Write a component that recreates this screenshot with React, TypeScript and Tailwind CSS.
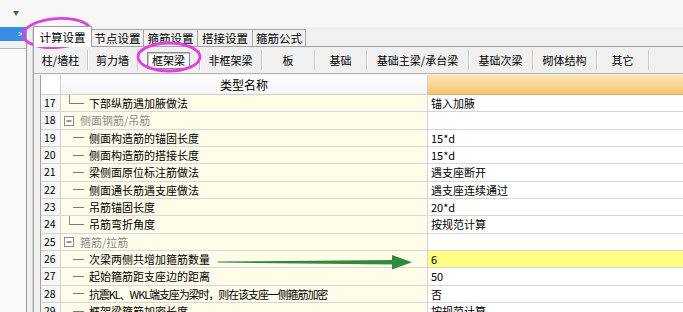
import React from "react";

type Row = { n: number; name: string; value?: string; kind: "child" | "last" | "group"; hl?: boolean; tight?: boolean };

const rows: Row[] = [
  { n: 17, name: "下部纵筋遇加腋做法", value: "锚入加腋", kind: "last" },
  { n: 18, name: "侧面钢筋/吊筋", kind: "group" },
  { n: 19, name: "侧面构造筋的锚固长度", value: "15*d", kind: "child" },
  { n: 20, name: "侧面构造筋的搭接长度", value: "15*d", kind: "child" },
  { n: 21, name: "梁侧面原位标注筋做法", value: "遇支座断开", kind: "child" },
  { n: 22, name: "侧面通长筋遇支座做法", value: "遇支座连续通过", kind: "child" },
  { n: 23, name: "吊筋锚固长度", value: "20*d", kind: "child" },
  { n: 24, name: "吊筋弯折角度", value: "按规范计算", kind: "last" },
  { n: 25, name: "箍筋/拉筋", kind: "group" },
  { n: 26, name: "次梁两侧共增加箍筋数量", value: "6", kind: "child", hl: true },
  { n: 27, name: "起始箍筋距支座边的距离", value: "50", kind: "child" },
  { n: 28, name: "抗震KL、WKL端支座为梁时，则在该支座一侧箍筋加密", value: "否", kind: "child", tight: true },
  { n: 29, name: "框架梁箍筋加密长度", value: "按规范计算", kind: "child" },
];

const tabs = [
  { label: "计算设置", w: "w-[59px]", active: true },
  { label: "节点设置", w: "w-[52px]" },
  { label: "箍筋设置", w: "w-[54px]" },
  { label: "搭接设置", w: "w-[55px]" },
  { label: "箍筋公式", w: "w-[53px]" },
];

const subTabs = [
  { label: "柱/墙柱", w: "w-[53px]" },
  { label: "剪力墙", w: "w-[49px]" },
  { label: "框架梁", w: "w-[61px]", active: true },
  { label: "非框架梁", w: "w-[61px]" },
  { label: "板", w: "w-[52px]" },
  { label: "基础", w: "w-[51px]" },
  { label: "基础主梁/承台梁", w: "w-[101px]" },
  { label: "基础次梁", w: "w-[63px]" },
  { label: "砌体结构", w: "w-[63px]" },
  { label: "其它", w: "w-[51px]" },
];

function Connector({ kind }: { kind: Row["kind"] }) {
  if (kind === "group") {
    return (
      <svg width="19" height="17" className="shrink-0">
        <rect x="3.5" y="4.5" width="9" height="9" fill="#fff" stroke="#8c8c8c" />
        <line x1="5.5" y1="9" x2="10.5" y2="9" stroke="#333" />
      </svg>
    );
  }
  return (
    <svg width="28" height="17" className="shrink-0">
      {kind === "last" && <line x1="8.5" y1="0" x2="8.5" y2="9" stroke="#8a8a8a" />}
      <line x1={kind === "last" ? 9 : 12} y1="8.5" x2="23" y2="8.5" stroke="#7a7a7a" />
    </svg>
  );
}

export default function App() {
  return (
    <div className="relative w-[683px] h-[312px] overflow-hidden bg-[#f0f0f0] font-[family-name:Noto_Sans_CJK_SC,sans-serif] text-[11px] leading-[12px] text-black">
      {/* top strip */}
      <div className="h-[27px] bg-[#f7f7f7] pl-[13px] pt-[10px]">
        <span className="block text-[6px] leading-[6px] text-[#555]">▼</span>
      </div>

      <div className="flex h-[285px]">
        {/* left tree panel */}
        <div className="flex w-[33px] shrink-0">
          <div className="flex w-[27px] flex-col border-r border-[#9c9c9c]">
            <div className="flex h-[14px] items-center justify-end bg-[#3a8ee2] pr-[3px] text-[9px] text-white">
              &gt;
            </div>
            <div className="h-[7px]" />
            <div className="flex-1 border-t border-[#b4b4b4] bg-[#fafafa]" />
          </div>
          <div className="w-[6px] border-r border-[#d8d8d8]" />
        </div>

        {/* settings pane */}
        <div className="flex flex-1 flex-col">
          <div className="flex h-[19px] items-end">
            {tabs.map((t) =>
              t.active ? (
                <div
                  key={t.label}
                  className={`${t.w} relative z-10 mb-[-1px] flex h-[21px] items-center justify-center border border-b-0 border-[#9c9c9c] bg-white text-[11.5px]`}
                >
                  {t.label}
                </div>
              ) : (
                <div
                  key={t.label}
                  className={`${t.w} flex h-[17px] items-center justify-center border border-b-0 border-l-0 border-[#a8a8a8] bg-[#f0f0f0] text-[11.5px]`}
                >
                  {t.label}
                </div>
              )
            )}
          </div>

          <div className="flex flex-1 flex-col border-l border-t border-[#a0a0a0]">
            <div className="flex h-[27px] items-center border-b border-[#b4b4b4]">
              {subTabs.map((s) => (
                <React.Fragment key={s.label}>
                  <div className={`${s.w} flex h-full items-center justify-center`}>
                    {s.active ? (
                      <div className="flex h-[17px] w-[43px] items-center justify-center border border-[#8a8a8a] bg-[#f9f9f9] shadow-[inset_1px_1px_0_#c8c8c8]">
                        {s.label}
                      </div>
                    ) : (
                      s.label
                    )}
                  </div>
                  <div className="h-[20px] w-px bg-[#c6c6c6] shadow-[1px_0_0_#ffffff]" />
                </React.Fragment>
              ))}
            </div>

            {/* grid */}
            <div className="pl-[6px] pt-[1px]">
              <div className="border-l border-[#a0a0a0]">
                <div className="flex h-[20px]">
                  <div className="w-[20px] shrink-0 border-b border-r border-[#cfcfcf] bg-white" />
                  <div className="flex w-[367px] shrink-0 items-center justify-center border-b border-r border-[#cfcfcf] bg-gradient-to-b from-white to-[#f3f3f3] text-[12px]">
                    类型名称
                  </div>
                  <div className="flex-1 border-b border-[#d8b26a] bg-gradient-to-b from-[#fde5b6] to-[#f6c56f]" />
                </div>

                {rows.map((r) => (
                  <div key={r.n} className="flex h-[17.33px]">
                    <div className="flex w-[20px] shrink-0 items-center border-b border-r border-[#d2d2d2] bg-[#f6f6f6] pl-[3px] text-[10.5px]">
                      {r.n}
                    </div>
                    <div className="flex w-[367px] shrink-0 items-center overflow-hidden whitespace-nowrap border-b border-r border-[#d6d6d6] bg-[#fffdea]">
                      <Connector kind={r.kind} />
                      <span
                        className={`${r.kind === "group" ? "text-[#8a8a8a]" : ""} ${
                          r.tight ? "tracking-[-1.1px]" : ""
                        }`}
                      >
                        {r.name}
                      </span>
                    </div>
                    <div
                      className={`flex flex-1 items-center border-b border-[#d6d6d6] pl-[3px] ${
                        r.hl ? "bg-[#ffff84]" : "bg-white"
                      }`}
                    >
                      {r.value}
                    </div>
                  </div>
                ))}
              </div>
            </div>
          </div>
        </div>
      </div>

      {/* annotations drawn over the screenshot */}
      <svg className="pointer-events-none absolute inset-0" width="683" height="312">
        <ellipse cx="57" cy="33" rx="34" ry="14.5" fill="none" stroke="#e040e0" strokeWidth="2.8" transform="rotate(-4 57 33)" />
        <ellipse cx="169" cy="57" rx="31" ry="14" fill="none" stroke="#e040e0" strokeWidth="2.8" />
        <polygon points="218,261.6 394,260 394,264.4 218,262.6" fill="#2f8a3b" />
        <polygon points="392,255 412,262.2 392,269.5" fill="#2f8a3b" />
      </svg>
    </div>
  );
}
